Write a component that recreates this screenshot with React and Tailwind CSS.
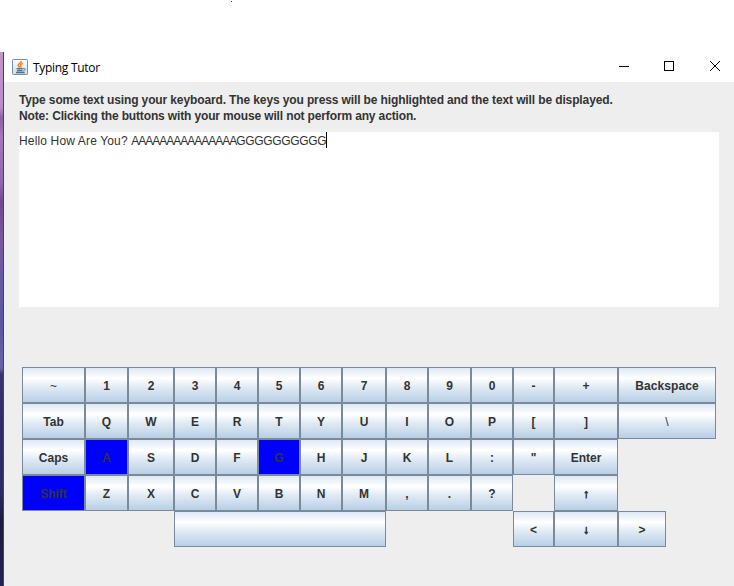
const COLUMNS =
  "grid grid-cols-[63px_43px_46px_42px_42px_42px_42px_44px_42px_43px_42px_41px_64px_98px] auto-rows-[36px]";

const KEYS = [
  "~", "1", "2", "3", "4", "5", "6", "7", "8", "9", "0", "-", "+", "Backspace",
  "Tab", "Q", "W", "E", "R", "T", "Y", "U", "I", "O", "P", "[", "]", "\\",
  "Caps", "A", "S", "D", "F", "G", "H", "J", "K", "L", ":", "\"", "Enter", null,
  "Shift", "Z", "X", "C", "V", "B", "N", "M", ",", ".", "?", null, "↑", null,
];

const PRESSED = ["A", "G", "Shift"];

const LABEL_STYLES = {
  "~": "font-normal",
  "\\": "font-normal",
  "↑": "[-webkit-text-stroke:0.7px_#333333]",
  "↓": "[-webkit-text-stroke:0.7px_#333333]",
  Backspace: "tracking-[0.1px]",
};

function Key({ label, className = "" }) {
  const face = PRESSED.includes(label)
    ? "bg-[#0000ff]"
    : "bg-[linear-gradient(to_bottom,#dde8f3_0%,#ffffff_30%,#dde8f3_60%,#b8cfe5_100%)]";
  return (
    <button
      type="button"
      className={`flex h-[36px] items-center justify-center border border-[#7a8a99] pt-px text-[12px] leading-[16px] font-bold text-[#333333] ${face} ${className}`}
    >
      <span className={LABEL_STYLES[label]}>{label}</span>
    </button>
  );
}

function Keyboard() {
  return (
    <div className={`mt-[60px] ml-[3px] ${COLUMNS}`}>
      {KEYS.map((label, i) => (label === null ? <div key={i} /> : <Key key={i} label={label} />))}
      <Key label="" className="col-start-4 col-span-5" />
      <Key label="<" className="col-start-12" />
      <Key label="↓" />
      <Key label=">" className="w-[48px]" />
    </div>
  );
}

function JavaIcon() {
  return (
    <svg width="16" height="16" viewBox="0 0 16 16" fill="none">
      <defs>
        <linearGradient id="tile" x1="0" y1="0" x2="0" y2="1">
          <stop offset="0" stopColor="#ffffff" />
          <stop offset="1" stopColor="#cfdbe4" />
        </linearGradient>
      </defs>
      <rect x=".5" y=".5" width="15" height="15" rx=".8" fill="url(#tile)" stroke="#7592a8" />
      <path d="M9.3 2C9.6 4 6 4.7 6.2 6.5c.1.9 1.1 1.2 1.5 2.1M11 4.4C9.1 5 8 5.9 8.7 6.8c.5.6.5 1.1-.1 1.8" stroke="#ee8125" strokeWidth="1.5" />
      <path d="M4.5 9.6h6.3M5 11.5h5.6M4 13.5h8.6" stroke="#4d7593" strokeWidth="1.3" />
      <path d="M11.2 9.6c2.6-.7 2.5 1.6.2 2.2" stroke="#4d7593" />
    </svg>
  );
}

function TitleBar() {
  return (
    <header className="flex h-[30px] items-center bg-white pl-2">
      <JavaIcon />
      <h1 className="ml-[5px] pt-px font-['Open_Sans','Noto_Sans',sans-serif] text-[12px] leading-4 tracking-[-0.3px] text-black">
        Typing Tutor
      </h1>
      <svg className="ml-auto" width="116" height="30" viewBox="0 0 116 30" fill="none" stroke="#000">
        <path d="M1 14.5h10M46.5 9.5h9v9h-9z" shapeRendering="crispEdges" />
        <path d="M92 9l10 10M102 9l-10 10" />
      </svg>
    </header>
  );
}

export default function App() {
  return (
    <div className="flex h-[586px] w-[734px] flex-col overflow-hidden bg-white font-['Liberation_Sans',Arial,sans-serif]">
      <div className="flex h-[52px] shrink-0">
        <span className="mt-px ml-[231px] size-px bg-[#2020c0]" />
      </div>
      <div className="flex flex-1">
        <div className="w-1 border-r border-[#49434f] bg-[linear-gradient(to_bottom,#c294cb_0px,#b98dc6_55px,#8c62a3_66px,#a377b8_85px,#9068ab_130px,#704a8c_150px,#79589f_190px,#6659a5_225px,#5c55a3_275px,#6962aa_316px,#393570_322px,#2f2c63_370px,#2b2b61_440px,#1b1b3c_470px,#232350_534px)]" />
        <main className="flex-1 bg-[#eeeeee]">
          <TitleBar />
          <div className="pt-[10px] pl-[15px]">
            <p className="h-[40px] text-[12px] leading-4 font-bold tracking-[-0.122px] whitespace-nowrap text-[#333333]">
              Type some text using your keyboard. The keys you press will be highlighted and the text will be displayed.
              <br />
              <span className="tracking-[-0.142px]">
                Note: Clicking the buttons with your mouse will not perform any action.
              </span>
            </p>
            <div className="flex h-[175px] w-[700px] items-start bg-white text-[12px] leading-[18px] whitespace-pre text-[#333333]">
              <span className="tracking-[0.15px]">Hello How Are You? </span>
              <span className="tracking-[-1.004px]">AAAAAAAAAAAAAAA</span>
              <span className="tracking-[-0.334px]">GGGGGGGGGG</span>
              <span className="h-4 w-px bg-black" />
            </div>
            <Keyboard />
          </div>
        </main>
      </div>
    </div>
  );
}
